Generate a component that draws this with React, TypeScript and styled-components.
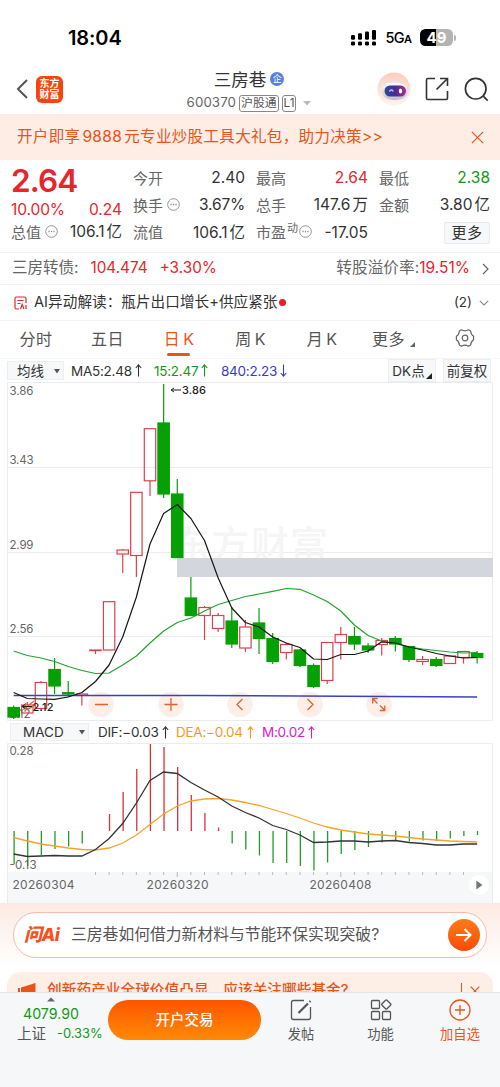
import React from 'react';
import styled, { createGlobalStyle } from 'styled-components';

const Global = createGlobalStyle`
  * { box-sizing: border-box; }
  html, body { margin: 0; padding: 0; background: #fff; }
  body { font-family: Inter, "Noto Sans CJK SC", sans-serif; color: #333; }
  svg { display: block; flex: none; }
`;

const RED = '#e6252d';
const GREEN = '#14981a';
const ORANGE = '#e8541a';

const Page = styled.div`
  width: 500px;
  height: 1087px;
  overflow: hidden;
  display: flex;
  flex-direction: column;
  background: #fff;
`;

const Txt = styled.span<{ $size?: number; $color?: string; $weight?: number; $ls?: number; $ml?: number }>`
  font-size: ${p => p.$size ?? 15.5}px;
  color: ${p => p.$color ?? '#333'};
  font-weight: ${p => p.$weight ?? 400};
  letter-spacing: ${p => p.$ls ?? 0}px;
  margin-left: ${p => p.$ml ?? 0}px;
  line-height: 1.2;
  white-space: nowrap;
`;

const Spacer = styled.div`
  flex: 1;
`;

/* status bar */
const StatusBar = styled.div`
  height: 64px;
  flex: none;
  display: flex;
  align-items: center;
  padding: 11px 44px 0 68px;
`;
const Network = styled.div`
  display: flex;
  align-items: baseline;
  margin-left: 8px;
`;
const Battery = styled.div`
  display: flex;
  align-items: center;
  margin-left: 8px;
`;
const BatteryBody = styled.div`
  width: 33px;
  height: 17px;
  border-radius: 5.5px;
  background: linear-gradient(90deg, #000 49%, #b4b4b4 49%);
  color: #fff;
  font-size: 15px;
  font-weight: 700;
  line-height: 17px;
  text-align: center;
`;
const BatteryTip = styled.div`
  width: 2px;
  height: 6px;
  margin-left: 1px;
  border-radius: 0 2px 2px 0;
  background: #b4b4b4;
`;

/* header */
const Header = styled.div`
  height: 50px;
  flex: none;
  display: grid;
  grid-template-columns: 176px 146px 178px;
`;
const HeaderLeft = styled.div`
  display: flex;
  align-items: center;
  padding-left: 16px;
  gap: 8px;
`;
const Logo = styled.div`
  width: 27px;
  height: 27px;
  border-radius: 6px;
  background: #f2450f;
  color: #fff;
  font-size: 10px;
  font-weight: 700;
  line-height: 11.5px;
  text-align: center;
  padding-top: 2px;
`;
const HeaderTitle = styled.div`
  display: flex;
  flex-direction: column;
  align-items: center;
  padding-top: 4px;
`;
const TitleLine = styled.div`
  display: flex;
  align-items: center;
  height: 22px;
  gap: 4px;
`;
const CodeLine = styled.div`
  display: flex;
  align-items: center;
  height: 20px;
  gap: 3px;
  margin-top: 3px;
`;
const EntBadge = styled.div`
  width: 14px;
  height: 14px;
  border-radius: 50%;
  background: #5480e0;
  color: #fff;
  font-size: 9px;
  line-height: 14px;
  text-align: center;
`;
const Tag = styled.div`
  height: 17px;
  border: 1px solid #888;
  border-radius: 3px;
  padding: 0 1px;
  font-size: 11.8px;
  line-height: 15px;
  color: #555;
`;
const HeaderRight = styled.div`
  display: flex;
  align-items: center;
  justify-content: flex-end;
  padding-right: 11px;
`;

const Banner = styled.div`
  height: 46px;
  flex: none;
  display: flex;
  align-items: center;
  justify-content: space-between;
  padding: 1px 16px 0 17px;
  background: #fdede4;
`;

/* quote */
const Quote = styled.div`
  height: 92px;
  flex: none;
  display: grid;
  grid-template-columns: 111px 112px 112px 111px;
  column-gap: 11px;
  padding: 5px 0 0 11px;
`;
const Column = styled.div`
  display: flex;
  flex-direction: column;
`;
const Row = styled.div<{ $h?: number }>`
  height: ${p => p.$h ?? 27.2}px;
  display: flex;
  align-items: center;
  justify-content: space-between;
`;
const Label = styled.span`
  display: flex;
  align-items: center;
  font-size: 15px;
  line-height: 20px;
  color: #666;
  white-space: nowrap;
  gap: 4px;
`;
const Sup = styled.span`
  font-size: 11px;
  line-height: 11px;
  margin: -8px -3px 0 -3px;
`;
const MoreButton = styled.div`
  width: 46px;
  height: 22px;
  margin-left: auto;
  border: 1px solid #e6e9ee;
  border-radius: 2px;
  background: #f7f8fa;
  font-size: 15px;
  line-height: 20px;
  letter-spacing: 0.5px;
  text-align: center;
  color: #333;
`;
const Unit = styled.span`
  margin-left: 2px;
`;

const LineRow = styled.div<{ $h: number; $pl: number }>`
  height: ${p => p.$h}px;
  flex: none;
  display: flex;
  align-items: center;
  padding: 0 11px 0 ${p => p.$pl}px;
  border-top: 1px solid #f3f3f5;
`;
const Dot = styled.div`
  width: 7px;
  height: 7px;
  border-radius: 50%;
  margin-left: 2px;
  background: #ea1c24;
`;

/* tabs */
const Tabs = styled.div`
  height: 39px;
  flex: none;
  display: grid;
  grid-template-columns: 72px 71px 72px 71px 72px 71px 71px;
  border-top: 1px solid #f3f3f5;
  border-bottom: 1px solid #f5f5f7;
`;
const Tab = styled.div<{ $on?: boolean }>`
  display: flex;
  align-items: center;
  justify-content: center;
  gap: 5px;
  font-size: 16px;
  padding-bottom: 3px;
  color: ${p => (p.$on ? ORANGE : '#555')};
  letter-spacing: 0.4px;
  word-spacing: -1.8px;
  position: relative;
  &::after {
    content: '';
    position: absolute;
    display: ${p => (p.$on ? 'block' : 'none')};
    left: 24px;
    bottom: 2px;
    width: 23px;
    height: 3px;
    border-radius: 2px;
    background: ${ORANGE};
  }
`;

/* indicators */
const Indicator = styled.div<{ $h: number; $pl: number }>`
  height: ${p => p.$h}px;
  flex: none;
  display: flex;
  align-items: center;
  padding: 0 9px 0 ${p => p.$pl}px;
`;
const Select = styled.div<{ $w: number; $h: number; $pl: number }>`
  width: ${p => p.$w}px;
  height: ${p => p.$h}px;
  display: flex;
  align-items: center;
  justify-content: space-between;
  padding: 0 3px 0 ${p => p.$pl}px;
  border: 1px solid #eceef2;
  background: #f7f8fa;
  font-size: 13.5px;
  line-height: 14px;
  white-space: nowrap;
`;
const Reading = styled.div<{ $w: number; $ml: number; $color: string }>`
  width: ${p => p.$w}px;
  margin-left: ${p => p.$ml}px;
  display: flex;
  align-items: center;
  justify-content: space-between;
  color: ${p => p.$color};
  font-size: 13.5px;
  letter-spacing: -0.25px;
  line-height: 18px;
  white-space: nowrap;
`;
const Chip = styled.div<{ $w: number }>`
  width: ${p => p.$w}px;
  height: 23px;
  margin-left: 7px;
  display: flex;
  align-items: center;
  justify-content: center;
  border: 1px solid #eceef2;
  background: #f7f8fa;
  font-size: 13.5px;
  white-space: nowrap;
  line-height: 20px;
`;

/* ask AI */
const AskZone = styled.div`
  height: 89px;
  flex: none;
  overflow: hidden;
  padding: 8px 13px 0;
  background: linear-gradient(180deg, #fdeae2 0, #fff 62px);
  border-top: 1px solid #f0ecec;
`;
const AskBar = styled.div`
  height: 46px;
  display: flex;
  align-items: center;
  border: 1px solid #f5bcab;
  border-radius: 23px;
  background: #fff;
  padding: 0 6px 0 10px;
`;
const AskLogo = styled.span`
  font-size: 18px;
  font-weight: 800;
  font-style: italic;
  letter-spacing: -0.6px;
  line-height: 22px;
  color: #f4511e;
  width: 40px;
  white-space: nowrap;
`;
const GoButton = styled.div`
  width: 32px;
  height: 32px;
  border-radius: 50%;
  display: flex;
  align-items: center;
  justify-content: center;
  background: linear-gradient(180deg, #ff7b1c, #fb4a05);
`;
const Notice = styled.div`
  height: 36px;
  margin: 14px -6px 0;
  border-radius: 14px;
  background: #fdeee6;
  display: flex;
  align-items: center;
  padding: 1px 13px 0 11px;
`;

/* bottom nav */
const Nav = styled.div`
  height: 95px;
  flex: none;
  display: flex;
  background: #f6f7f9;
  border-top: 1px solid #e4e5e9;
`;
const IndexBox = styled.div`
  width: 108px;
  display: flex;
  flex-direction: column;
  padding-top: 4px;
`;
const IndexLine = styled.div<{ $h: number; $top?: number }>`
  display: flex;
  align-items: center;
  height: ${p => p.$h}px;
  margin-top: ${p => p.$top ?? 0}px;
`;
const TradeButton = styled.div`
  width: 153px;
  height: 40px;
  margin-top: 7px;
  border-radius: 20px;
  background: linear-gradient(180deg, #ff5500, #ff8a05);
  color: #fff;
  font-size: 14.5px;
  font-weight: 500;
  line-height: 39px;
  text-align: center;
`;
const NavItem = styled.div<{ $w: number; $color?: string }>`
  width: ${p => p.$w}px;
  display: flex;
  flex-direction: column;
  align-items: center;
  padding-top: 6px;
  gap: 5px;
  font-size: 13.3px;
  line-height: 17px;
  color: ${p => p.$color ?? '#555'};
`;

const xAt = (i: number) => 13.7 + i * 13.63;

type Candle = [up: boolean, top: number, bottom: number, high: number, low: number];
const candles: Candle[] = [
  [false, 707.5, 717, 705.5, 719], [true, 705, 713, 702, 713], [true, 682.5, 708.5, 681, 711],
  [false, 669.5, 686, 658, 694], [false, 692.7, 694, 681, 697], [true, 694, 695.5, 694, 705.5],
  [true, 650, 650.6, 650, 654], [true, 601.7, 650, 601.7, 650], [true, 550, 554, 549, 573],
  [true, 492.3, 555.5, 492, 577], [true, 428.7, 480.8, 428, 496], [false, 423, 494, 384, 498],
  [false, 494, 557.5, 479, 557.5], [false, 598, 615.5, 577, 615.5], [true, 607.5, 615.5, 606, 640],
  [true, 615.5, 628.5, 613, 632], [false, 621, 644, 607, 648], [true, 627, 648, 620, 652],
  [false, 623, 638.5, 608, 654], [false, 638.5, 661.5, 633, 664], [true, 644.5, 652.5, 643, 659.5],
  [false, 650, 665.5, 649, 667], [false, 665.5, 686.5, 663.5, 688], [true, 642.5, 680.5, 642, 684],
  [true, 634.5, 642.5, 627, 659.5], [false, 636.5, 644, 627, 650], [false, 646, 650, 643, 653],
  [true, 640.5, 644.5, 638, 655.5], [false, 638.5, 644, 636, 651.5], [false, 646.5, 659.5, 646, 662],
  [true, 659.5, 661.5, 656, 665], [false, 659.5, 665.5, 657, 667], [true, 656, 663.5, 655, 663.5],
  [true, 651.5, 657.5, 651, 663.5], [false, 653.5, 657.5, 651, 663.5],
];
const ma5 = [692.5, 698.5, 699, 699.3, 697, 692.5, 681.5, 665, 637, 597, 544, 513.5, 504.5, 518.5, 540.5, 578, 608, 622.5, 627, 637, 643, 647.5, 659, 659.5, 654.5, 654.5, 651, 641.8, 643, 647, 650, 653.5, 656, 658, 657.5];
const ma15 = [651, 655.5, 658, 661.5, 666.5, 670.5, 673.5, 673, 665, 656, 643, 631, 622.5, 618, 611, 604.5, 600.5, 596.5, 594, 591.3, 588.5, 589.3, 595, 601.5, 611, 625, 635.5, 641, 643.5, 647, 649, 650.5, 652, 653, 652.5];
const bars = [864, 866, 855, 849, 846.5, 843.5, 831, 814, 792, 769, 744, 747, 767, 795, 813, 827.5, 843.5, 849.5, 855.5, 863, 863, 866, 870.5, 862.5, 854, 850, 847, 842.5, 840, 841.5, 840.5, 841, 838.5, 836, 835];
const dif = [854, 856.5, 856, 855.5, 856, 856, 849.5, 838.5, 823.5, 803, 780.5, 772, 773.5, 782.5, 790, 797, 806, 812.5, 818, 825.5, 829.5, 835, 842.5, 842, 841, 841, 842, 841, 840.5, 842.5, 843.5, 845, 845, 844, 844];
const dea = [837.5, 841, 844, 846, 848, 849.5, 850, 848, 843, 835, 824.5, 814, 806, 801, 799, 798.5, 800, 802.5, 805.5, 809.5, 813.5, 818, 823, 827, 830, 832, 834, 835, 836, 837.5, 839, 840, 841, 841.5, 842];
const points = (ys: number[]) => ys.map((y, i) => `${xAt(i).toFixed(1)},${y}`).join(' ');

const Caret = () => <svg width="6" height="6" viewBox="0 0 6 6"><path d="M0 1h6L3 5.5z" fill="#555" /></svg>;
const Arrow = ({ down }: { down?: boolean }) => (
  <svg width="7" height="13" viewBox="0 0 7 13" fill="none" stroke="currentColor" strokeWidth="1.1">
    <path d={down ? 'M3.5 .5V12M.8 9l2.700 3.200L6.200 9' : 'M3.500 12.500V1M.8 4l2.700-3.200L6.200 4'} />
  </svg>
);
const Dots = () => (
  <svg width="13" height="13" viewBox="0 0 13 13" fill="none" stroke="#8a8a8a" strokeWidth="0.9" style={{ marginTop: -3 }}>
    <circle cx="6.5" cy="6.5" r="5.8" />
    <path d="M3.4 6.5h1.2M5.9 6.5h1.2M8.4 6.5h1.2" strokeWidth="1.3" />
  </svg>
);
const Cross = ({ size, color }: { size: number; color: string }) => (
  <svg width={size} height={size} viewBox="0 0 12 12" stroke={color} strokeWidth="1.1"><path d="M.8.8l10.4 10.4M11.2.8L.8 11.2" /></svg>
);

const Robot = () => (
  <svg width="34" height="34" viewBox="0 0 34 34">
    <defs>
      <linearGradient id="halo" x1="0" y1="0" x2="0" y2="1"><stop offset="0" stopColor="#fccdbd" /><stop offset="1" stopColor="#fff3ee" /></linearGradient>
      <linearGradient id="visor"><stop offset="0" stopColor="#2b4a99" /><stop offset=".5" stopColor="#4b2a96" /><stop offset="1" stopColor="#a52c91" /></linearGradient>
      <linearGradient id="head" x1="0" y1="0" x2="0" y2="1"><stop offset="0" stopColor="#fff" /><stop offset="1" stopColor="#c3bfcb" /></linearGradient>
    </defs>
    <circle cx="17" cy="17" r="16.5" fill="url(#halo)" />
    <path d="M5 20C4 13 9 10 18 10.500c7-.5 13 3 12.500 10 0 5-7 7.500-13 7.500S6 26 5 20z" fill="url(#head)" />
    <path d="M4.500 14c0-3 2-4.500 4-3.500l1 4zM13 11c2-3 7-3 9.500 0z" fill="#e9e7ec" />
    <rect x="7.500" y="13.500" width="21.500" height="11" rx="5.500" fill="url(#visor)" />
    <path d="M12.500 19.500c.8-2 3-2 3.800 0" stroke="#b9c6ff" strokeWidth="1.400" fill="none" />
    <ellipse cx="23.500" cy="19" rx="1.700" ry="2.600" fill="#fff" />
  </svg>
);

const PriceChart = () => (
  <svg width="500" height="339" viewBox="0 382 500 339" fontFamily='Inter, "Noto Sans CJK SC", sans-serif'>
    <g stroke="#ececef" strokeWidth="1" fill="none">
      <path d="M7.500 382.500H492.500V720.500H7.500zM7.500 467.500H492.500M7.500 552.500H492.500M7.500 636.500H492.500" />
    </g>
    <text x="172" y="558" fontSize="38" fontWeight="500" fill="#f5f5f6" textLength="156">东方财富</text>
    <rect x="177" y="558" width="316" height="19" fill="#d3d6dc" />
    <g fontSize="11.500" fill="#666">
      <text x="9.500" y="395" textLength="24">3.86</text>
      <text x="9.500" y="464" textLength="24">3.43</text>
      <text x="9.500" y="549" textLength="24">2.99</text>
      <text x="9.500" y="633" textLength="24">2.56</text>
      <text x="9.500" y="718" textLength="21">2.12</text>
    </g>
    {[101, 171, 240, 310, 379].map(x => <circle key={x} cx={x} cy="704.500" r="12.800" fill="#fdeee7" />)}
    {candles.map(([up, top, bottom, high, low], i) => {
      const x = xAt(i);
      const c = up ? '#d9424c' : '#05a005';
      return (
        <g key={i} stroke={c} strokeWidth="1.200">
          {high < top && <path d={`M${x} ${high}V${top}`} />}
          {low > bottom && <path d={`M${x} ${bottom}V${low}`} />}
          <rect x={x - 5.700} y={top} width="11.400" height={bottom - top} fill={up ? 'none' : c} />
        </g>
      );
    })}
    <g fill="none" strokeWidth="1.200" strokeLinejoin="round">
      <path d={`M${xAt(0)} 695.500L200 695.500L${xAt(34)} 697`} stroke="#3b42c0" strokeWidth="1.400" />
      <polyline points={points(ma15)} stroke="#21a52b" />
      <polyline points={points(ma5)} stroke="#161616" />
    </g>
    <g fill="none" stroke="#e0632f" strokeWidth="1.300">
      <path d="M95 704.500h13M164.500 704.500h13M171 698v13M242.500 699l-5.500 5.500 5.500 5.500M307.500 699l5.500 5.500-5.500 5.500" />
      <path d="M372.700 703.500v-5h5M373 699l4.500 4.500M384.800 705.500v5h-5M384.500 710l-4.500-4.500" />
      <path d="M34 701l-10 8M26 703l-2 6 6-1M27 710l8-5" />
    </g>
    <g fontSize="11" fontWeight="500" fill="#222">
      <path d="M181 390H171M174 388L171 390l3 2" stroke="#222" fill="none" />
      <text x="182" y="394" textLength="24">3.86</text>
      <path d="M32 706.500H22M25 704.500L22 706.500l3 2" stroke="#222" fill="none" />
      <text x="32.500" y="710.500" textLength="21">2.12</text>
    </g>
  </svg>
);

const MacdChart = () => (
  <svg width="500" height="160" viewBox="0 743 500 160" fontFamily="Inter, sans-serif">
    <rect x="7" y="872" width="486" height="31" fill="#f6f7f9" />
    <path d="M7.500 903V743.500H492.500V903" fill="none" stroke="#ececef" />
    {bars.map((y, i) => i !== 6 && <path key={i} d={`M${xAt(i) + 0.400} 831V${y}`} stroke={y > 831 ? '#249a2a' : '#d8323d'} strokeWidth="1.300" />)}
    <polyline points={points(dea)} fill="none" stroke="#f5a32b" strokeWidth="1.300" />
    <polyline points={points(dif)} fill="none" stroke="#333338" strokeWidth="1.300" />
    {Array.from({ length: 28 }, (_, k) => k + 6).map(i => (
      <path key={i} d={`M${xAt(i)} 872v${i === 12 || i === 24 ? 5 : 3}`} stroke="#aaa" strokeWidth="0.800" />
    ))}
    <g fontSize="11.500" fill="#666">
      <text x="9.500" y="755" textLength="24">0.28</text>
      <text x="9.500" y="869" textLength="27">-0.13</text>
    </g>
    <g fontSize="12" fill="#666">
      <text x="12.500" y="889" textLength="62">20260304</text>
      <text x="146.500" y="889" textLength="62">20260320</text>
      <text x="309.500" y="889" textLength="62">20260408</text>
    </g>
    <circle cx="479" cy="885" r="10" fill="#fff" />
    <path d="M476.300 880.500l6.200 4.500-6.200 4.500z" fill="#777" />
  </svg>
);

export default function App() {
  return (
    <Page>
      <Global />
      <StatusBar>
        <Txt $size={20} $weight={600} $color="#000" $ls={-0.1}>18:04</Txt>
        <Spacer />
        <svg width="26" height="17" viewBox="0 0 26 17" fill="#000">
          {[0, 7, 14, 21].map((x, i) => (
            <g key={x}>
              <rect x={x} y="12.500" width="4" height="4" rx="1.300" />
              <rect x={x} y={6 - i * 1.700} width="4" height={4.700 + i * 1.700} rx="1.200" />
            </g>
          ))}
        </svg>
        <Network>
          <Txt $size={14.500} $weight={500} $color="#000" $ls={-0.6}>5G</Txt>
          <Txt $size={11} $weight={600} $color="#000">A</Txt>
        </Network>
        <Battery><BatteryBody>49</BatteryBody><BatteryTip /></Battery>
      </StatusBar>

      <Header>
        <HeaderLeft>
          <svg width="12" height="20" viewBox="0 0 12 20" fill="none" stroke="#555" strokeWidth="2"><path d="M11 1L2 10l9 9" /></svg>
          <Logo>东方<br />财富</Logo>
        </HeaderLeft>
        <HeaderTitle>
          <TitleLine>
            <Txt $size={17.5}>三房巷</Txt>
            <EntBadge>企</EntBadge>
          </TitleLine>
          <CodeLine>
            <Txt $size={13.3} $color="#666" $ls={0.1}>600370</Txt>
            <Tag>沪股通</Tag>
            <Tag>L1</Tag>
            <svg width="8" height="5" viewBox="0 0 8 5" style={{ marginLeft: 4 }}><path d="M0 0h8L4 4.500z" fill="#bbb" /></svg>
          </CodeLine>
        </HeaderTitle>
        <HeaderRight>
          <Robot />
          <svg width="24" height="24" viewBox="0 0 24 24" fill="none" stroke="#333" strokeWidth="1.600" style={{ marginLeft: 14 }}>
            <path d="M10 1.500H3Q1.500 1.500 1.500 3V21.500Q1.500 22.500 3 22.500H21Q22.500 22.500 22.500 21V14M15 1.500H22.500V9M22.500 1.500L11.500 12.500" />
          </svg>
          <svg width="25" height="25" viewBox="0 0 25 25" fill="none" stroke="#333" strokeWidth="1.700" style={{ marginLeft: 15 }}>
            <circle cx="11.700" cy="11.700" r="10.300" /><path d="M19.200 19.200l4.500 4.500" />
          </svg>
        </HeaderRight>
      </Header>

      <Banner>
        <Txt $size={15.5} $color={ORANGE} $ls={0.35}>开户即享<Unit>9888</Unit><Unit>元</Unit>专业炒股工具大礼包，助力决策&gt;&gt;</Txt>
        <Cross size={13} color={ORANGE} />
      </Banner>

      <Quote>
        <Column>
          <Row $h={32}><Txt $size={31.5} $weight={600} $color={RED} $ls={-0.9}>2.64</Txt></Row>
          <Row $h={27}><Txt $color={RED} $ls={-0.1}>10.00%</Txt><Txt $color={RED}>0.24</Txt></Row>
          <Row $h={17}><Label>总值<Dots /></Label><Txt>106.1<Unit>亿</Unit></Txt></Row>
        </Column>
        <Column>
          <Row><Label>今开</Label><Txt>2.40</Txt></Row>
          <Row><Label>换手<Dots /></Label><Txt $ls={-0.2}>3.67%</Txt></Row>
          <Row><Label>流值</Label><Txt>106.1<Unit>亿</Unit></Txt></Row>
        </Column>
        <Column>
          <Row><Label>最高</Label><Txt $color={RED}>2.64</Txt></Row>
          <Row><Label>总手</Label><Txt>147.6<Unit>万</Unit></Txt></Row>
          <Row><Label>市盈<Sup>动</Sup><Dots /></Label><Txt>-17.05</Txt></Row>
        </Column>
        <Column>
          <Row><Label>最低</Label><Txt $color={GREEN}>2.38</Txt></Row>
          <Row><Label>金额</Label><Txt>3.80<Unit>亿</Unit></Txt></Row>
          <Row><MoreButton>更多</MoreButton></Row>
        </Column>
      </Quote>

      <LineRow $h={32} $pl={12}>
        <Txt $size={15.5} $color="#666">三房转债:</Txt>
        <Txt $size={15.3} $color={RED} $ml={12}>104.474</Txt>
        <Txt $size={15.3} $color={RED} $ml={12}>+3.30%</Txt>
        <Spacer />
        <Txt $size={15.7} $color="#666">转股溢价率:</Txt>
        <Txt $size={15.5} $color={RED}>19.51%</Txt>
        <svg width="7" height="12" viewBox="0 0 7 12" fill="none" stroke="#666" strokeWidth="1.200" style={{ marginLeft: 12 }}><path d="M1 1l5 5-5 5" /></svg>
      </LineRow>

      <LineRow $h={36} $pl={14}>
        <svg width="13" height="14" viewBox="0 0 13 14" fill="none" stroke={RED} strokeWidth="1.200">
          <path d="M12 7V2.500Q12 1 10.500 1H2.500Q1 1 1 2.500V11.500Q1 13 2.500 13H5M3.500 4.500h6M3.500 7.500h3" />
          <path d="M6.500 13l1.700-4.500L10 13M12 9v4" />
        </svg>
        <Txt $size={14.600} $ml={7} $ls={0.05}>AI异动解读：瓶片出口增长+供应紧张</Txt>
        <Dot />
        <Spacer />
        <Txt $size={13.500}>(2)</Txt>
        <svg width="10" height="6" viewBox="0 0 10 6" fill="none" stroke="#888" strokeWidth="1.100" style={{ marginLeft: 7 }}><path d="M.8.8L5 5 9.200.8" /></svg>
      </LineRow>

      <Tabs>
        <Tab>分时</Tab>
        <Tab>五日</Tab>
        <Tab $on>日 K</Tab>
        <Tab>周 K</Tab>
        <Tab>月 K</Tab>
        <Tab>更多<svg width="5" height="5" viewBox="0 0 5 5" style={{ marginTop: 12 }}><path d="M5 0v5H0z" fill="#666" /></svg></Tab>
        <Tab>
          <svg width="20" height="20" viewBox="0 0 20 20" fill="none" stroke="#666" strokeWidth="1.200">
            <path d="M6.500 1.800Q10 3.800 13.500 1.800L15.600 3Q15.800 6.500 18.600 8.300V11.700Q15.800 13.500 15.600 17L13.500 18.200Q10 16.200 6.500 18.200L4.400 17Q4.200 13.500 1.400 11.700V8.300Q4.200 6.500 4.400 3z" strokeLinejoin="round" />
            <circle cx="10" cy="10" r="2.800" />
          </svg>
        </Tab>
      </Tabs>

      <Indicator $h={23} $pl={7}>
        <Select $w={57} $h={19} $pl={9}>均线<Caret /></Select>
        <Reading $w={71} $ml={7} $color="#333">MA5:2.48<Arrow /></Reading>
        <Reading $w={54} $ml={12} $color={GREEN}>15:2.47<Arrow /></Reading>
        <Reading $w={66} $ml={13} $color="#3440c0">840:2.23<Arrow down /></Reading>
        <Spacer />
        <Chip $w={48}>DK点<svg width="6" height="6" viewBox="0 0 6 6" style={{ marginTop: 11, marginLeft: 1 }}><path d="M6 0v6H0z" fill="#222" /></svg></Chip>
        <Chip $w={48}>前复权</Chip>
      </Indicator>
      <PriceChart />
      <Indicator $h={22} $pl={10}>
        <Select $w={79} $h={18} $pl={12}>MACD<Caret /></Select>
        <Reading $w={71} $ml={9} $color="#333">DIF:−0.03<Arrow /></Reading>
        <Reading $w={78} $ml={7} $color="#f39a1c">DEA:−0.04<Arrow /></Reading>
        <Reading $w={53} $ml={8} $color="#cf22cf">M:0.02<Arrow /></Reading>
      </Indicator>
      <MacdChart />

      <AskZone>
        <AskBar>
          <AskLogo>问Ai</AskLogo>
          <Txt $size={15.800} $color="#555" $ml={7}>三房巷如何借力新材料与节能环保实现突破?</Txt>
          <Spacer />
          <GoButton>
            <svg width="16" height="14" viewBox="0 0 16 14" fill="none" stroke="#fff" strokeWidth="2"><path d="M0 7h14.500M8.500 1l6 6-6 6" /></svg>
          </GoButton>
        </AskBar>
        <Notice>
          <svg width="18" height="15" viewBox="0 0 18 15" fill={ORANGE}><path d="M0 5h2v9H0zM3 4.500L17.500 0v15L3 12z" /></svg>
          <Txt $size={14.700} $color={ORANGE} $weight={500} $ml={11}>创新药产业全球价值凸显，应该关注哪些基金?</Txt>
          <Spacer />
          <svg width="1" height="16" viewBox="0 0 1 16"><path d="M.5 0v16" stroke={ORANGE} /></svg>
          <svg width="10" height="10" viewBox="0 0 12 12" stroke={ORANGE} strokeWidth="1.400" style={{ marginLeft: 8 }}><path d="M.8.8l10.400 10.400M11.200.8L.8 11.200" /></svg>
        </Notice>
      </AskZone>

      <Nav>
        <IndexBox>
          <svg width="8" height="5" viewBox="0 0 8 5" style={{ marginLeft: 47 }}><path d="M0 4.500L4 .5l4 4z" fill="#666" /></svg>
          <IndexLine $h={18} $top={3}><Txt $size={14.200} $color={GREEN} $ml={23}>4079.90</Txt></IndexLine>
          <IndexLine $h={20} $top={1}>
            <Txt $size={14.500} $color="#555" $ml={17}>上证</Txt>
            <Txt $size={12.900} $color={GREEN} $ml={11}>-0.33%</Txt>
          </IndexLine>
        </IndexBox>
        <TradeButton>开户交易</TradeButton>
        <NavItem $w={80}>
          <svg width="22" height="22" viewBox="0 0 22 22" fill="none" stroke="#555" strokeWidth="1.300">
            <path d="M14 1.500H3.500Q1.500 1.500 1.500 3.500V18.500Q1.500 20.500 3.500 20.500H18.500Q20.500 20.500 20.500 18.500V8" />
            <path d="M8.500 14L18 4.500M19.500 3l1-1" strokeWidth="2.200" />
          </svg>
          发帖
        </NavItem>
        <NavItem $w={79}>
          <svg width="22" height="22" viewBox="0 0 22 22" fill="none" stroke="#555" strokeWidth="1.300">
            <rect x="1.500" y="1.500" width="8" height="8" rx="1" /><rect x="1.500" y="12.500" width="8" height="8" rx="1" />
            <rect x="12.500" y="12.500" width="8" height="8" rx="1" /><rect x="12.800" y="2" width="7" height="7" rx="1" transform="rotate(45 16.300 5.500)" />
          </svg>
          功能
        </NavItem>
        <NavItem $w={80} $color={ORANGE}>
          <svg width="22" height="22" viewBox="0 0 22 22" fill="none" stroke={ORANGE} strokeWidth="1.300">
            <circle cx="11" cy="11" r="10" /><path d="M6 11h10M11 6v10" />
          </svg>
          加自选
        </NavItem>
      </Nav>
    </Page>
  );
}
